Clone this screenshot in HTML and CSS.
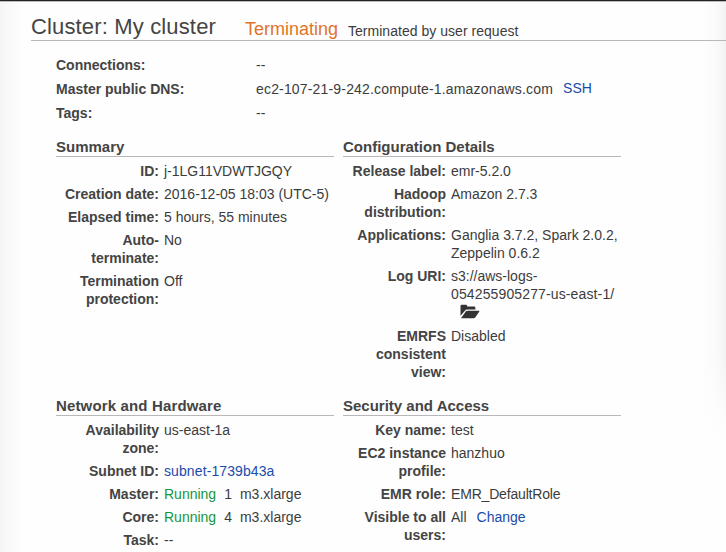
FILE: index.html
```html
<!DOCTYPE html>
<html lang="en">
<head>
<meta charset="utf-8">
<title>Cluster: My cluster</title>
<link rel="stylesheet" href="styles.css">
</head>
<body>
<main class="page">
  <header class="page-header">
    <h1 class="title">Cluster: My cluster</h1>
    <span class="state">Terminating</span>
    <span class="reason">Terminated by user request</span>
  </header>
  <dl class="overview">
    <dt>Connections:</dt><dd>--</dd>
    <dt>Master public DNS:</dt><dd><span class="dns">ec2-107-21-9-242.compute-1.amazonaws.com</span><a class="ssh" href="#">SSH</a></dd>
    <dt>Tags:</dt><dd>--</dd>
  </dl>
  <div class="sections">
    <section>
      <h2>Summary</h2>
      <dl class="details">
        <dt>ID:</dt><dd>j-1LG11VDWTJGQY</dd>
        <dt>Creation date:</dt><dd class="nowrap">2016-12-05 18:03 (UTC-5)</dd>
        <dt>Elapsed time:</dt><dd>5 hours, 55 minutes</dd>
        <dt>Auto-<br>terminate:</dt><dd>No</dd>
        <dt>Termination protection:</dt><dd>Off</dd>
      </dl>
    </section>
    <section>
      <h2>Configuration Details</h2>
      <dl class="details">
        <dt>Release label:</dt><dd>emr-5.2.0</dd>
        <dt>Hadoop distribution:</dt><dd>Amazon 2.7.3</dd>
        <dt>Applications:</dt><dd>Ganglia 3.7.2, Spark 2.0.2,<br>Zeppelin 0.6.2</dd>
        <dt>Log URI:</dt>
        <dd>s3://aws-logs-<br><span class="bucket">054255905277-us-east-1/</span>
          <svg class="folder" viewBox="0 0 20 15" width="20" height="15" aria-hidden="true">
            <path d="M.5 11.8V2Q.5.8 1.8.8H6Q7 .8 7.2 2V2.6H14Q15.4 2.6 15.4 4V5.6H7.3Q5.7 5.6 4.7 6.9Z"/>
            <path d="M1 14.2 5.8 7.6Q6.5 6.7 7.6 6.7H18.8Q19.8 6.8 19.2 7.8L15.2 13.4Q14.6 14.2 13.6 14.2Z"/>
          </svg>
        </dd>
        <dt>EMRFS consistent view:</dt><dd>Disabled</dd>
      </dl>
    </section>
    <section>
      <h2 class="wide">Network and Hardware</h2>
      <dl class="details">
        <dt>Availability zone:</dt><dd>us-east-1a</dd>
        <dt>Subnet ID:</dt><dd><a class="subnet" href="#">subnet-1739b43a</a></dd>
        <dt>Master:</dt><dd class="nodes"><span class="running">Running</span><span>1</span><span>m3.xlarge</span></dd>
        <dt>Core:</dt><dd class="nodes"><span class="running">Running</span><span>4</span><span>m3.xlarge</span></dd>
        <dt>Task:</dt><dd>--</dd>
      </dl>
    </section>
    <section>
      <h2>Security and Access</h2>
      <dl class="details">
        <dt>Key name:</dt><dd>test</dd>
        <dt>EC2 instance profile:</dt><dd>hanzhuo</dd>
        <dt>EMR role:</dt><dd class="role">EMR_DefaultRole</dd>
        <dt>Visible to all users:</dt><dd>All<a class="change" href="#">Change</a></dd>
      </dl>
    </section>
  </div>
</main>
</body>
</html>
```
FILE: styles.css
```css
* { box-sizing: border-box; }
body {
  margin: 0;
  height: 552px;
  overflow: hidden;
  background: #fefefe;
  color: #3c3c3c;
  font: 14px/18px "Liberation Sans", Arial, Helvetica, sans-serif;
}
.page {
  height: 552px;
  border-top: 1px solid #222;
  box-shadow: inset 0 1px #bbb;
  background:
    linear-gradient(to right, #f5f5f5, #fafafa 10px, #fefefe00 26px) left top / 26px 100% no-repeat,
    linear-gradient(to bottom, #fefefe00 350px, #fefefe 440px) right top / 26px 440px no-repeat,
    linear-gradient(to left, #f2f2f2, #fafafa 10px, #fefefe00 26px) right top / 26px 440px no-repeat,
    #fefefe;
}
h1, h2, dl, dt, dd { margin: 0; }
a { color: #1a4ba8; text-decoration: none; }
.page-header {
  display: flex;
  align-items: baseline;
  height: 40px;
  margin-left: 31px;
  padding-top: 12px;
  border-bottom: 1px solid #b8b8b8;
  white-space: nowrap;
}
.title { width: 214px; color: #444; font-size: 22px; font-weight: 400; line-height: 28px; letter-spacing: .15px; }
.state { position: relative; top: 1px; width: 103px; color: #e07428; font-size: 18px; }
.reason { position: relative; top: 2px; letter-spacing: .03px; }
.overview {
  display: grid;
  grid-template-columns: 200px 1fr;
  row-gap: 6px;
  padding: 15px 0 0 56px;
}
dt { color: #444; font-weight: 700; }
.overview dd { display: flex; }
.dns { letter-spacing: .17px; }
.ssh { margin: -1px 0 0 10px; }
.sections {
  display: grid;
  grid-template-columns: 278px 278px;
  column-gap: 9px;
  row-gap: 16px;
  padding: 16px 0 0 56px;
}
h2 {
  height: 19px;
  margin-bottom: 5px;
  border-bottom: 1px solid #b8b8b8;
  color: #444;
  font-size: 15px;
  line-height: 18px;
}
.wide { letter-spacing: .15px; }
.details {
  display: grid;
  grid-template-columns: 103px 1fr;
  gap: 5px;
}
.details dt { text-align: right; }
.nowrap { white-space: nowrap; }
.bucket { letter-spacing: .13px; }
.subnet { letter-spacing: .1px; }
.role { letter-spacing: -.18px; }
.folder { display: block; margin: 1px 0 3px 9px; fill: #333; }
.nodes { display: flex; gap: 8px; }
.running { color: #16963a; }
.change { margin-left: 10px; }
```
